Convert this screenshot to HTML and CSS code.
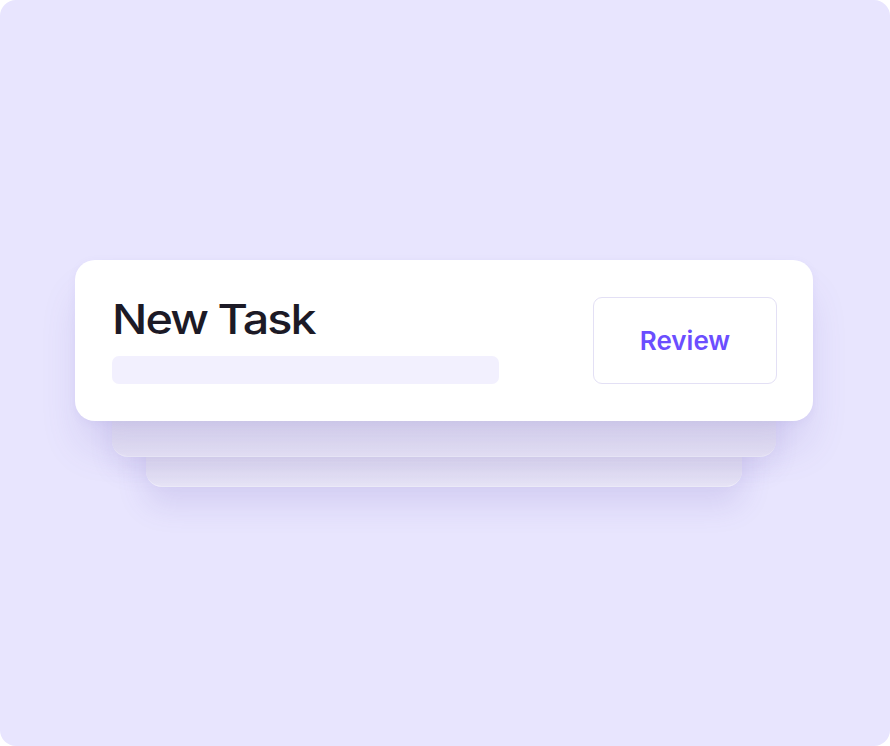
FILE: index.html
```html
<!DOCTYPE html>
<html>
<head>
<meta charset="utf-8">
<link rel="stylesheet" href="styles.css">
</head>
<body>
<div class="frame">
  <div class="stack">
    <div class="card">
      <div class="info">
        <h1 class="title">New Task</h1>
        <div class="bar"></div>
      </div>
      <button class="review">Review</button>
    </div>
    <div class="back back-1"></div>
    <div class="back back-2"></div>
  </div>
</div>
</body>
</html>
```
FILE: styles.css
```css
html, body {
  margin: 0;
  padding: 0;
  background: #ffffff;
}
.frame {
  width: 890px;
  height: 746px;
  border-radius: 16px;
  background: #e8e5fe;
  display: flex;
  align-items: center;
  justify-content: center;
  overflow: hidden;
}
.stack {
  display: flex;
  flex-direction: column;
  align-items: center;
  margin-left: -2px;
}
.card {
  position: relative;
  z-index: 3;
  width: 738px;
  height: 161px;
  box-sizing: border-box;
  padding: 37px 36px 37px 37px;
  background: #ffffff;
  border-radius: 20px;
  display: flex;
  justify-content: space-between;
  align-items: stretch;
  box-shadow: 0 30px 40px -6px rgba(100, 80, 180, 0.16), 0 2px 10px rgba(100, 80, 180, 0.06);
}
.info {
  display: flex;
  flex-direction: column;
  justify-content: space-between;
}
.title {
  margin: 1px 0 0 0;
  font-family: Inter, "Liberation Sans", sans-serif;
  font-weight: 500;
  font-size: 41px;
  line-height: 42px;
  letter-spacing: -1.7px;
  color: #1c1a26;
  transform: scaleX(1.14);
  transform-origin: left center;
  white-space: nowrap;
}
.bar {
  width: 387px;
  height: 28px;
  border-radius: 7px;
  background: #f2f0fe;
}
.review {
  width: 184px;
  height: 87px;
  box-sizing: border-box;
  border: 1px solid #e3e0f5;
  border-radius: 9px;
  background: #ffffff;
  font-family: Inter, "Liberation Sans", sans-serif;
  font-weight: 600;
  font-size: 26px;
  color: #6b4eff;
  padding: 0;
}
.back {
  position: relative;
  height: 80px;
  border-radius: 16px;
  background: linear-gradient(180deg, #e2dff3 55%, #e7e4f6 100%);
  border-bottom: 1px solid rgba(255, 255, 255, 0.4);
  box-sizing: border-box;
}
.back-1 {
  z-index: 2;
  width: 664px;
  margin-top: -44px;
  box-shadow: 0 14px 24px rgba(100, 80, 180, 0.1);
}
.back-2 {
  z-index: 1;
  width: 596px;
  margin-top: -50px;
  box-shadow: 0 18px 30px rgba(100, 80, 180, 0.15);
}
```
